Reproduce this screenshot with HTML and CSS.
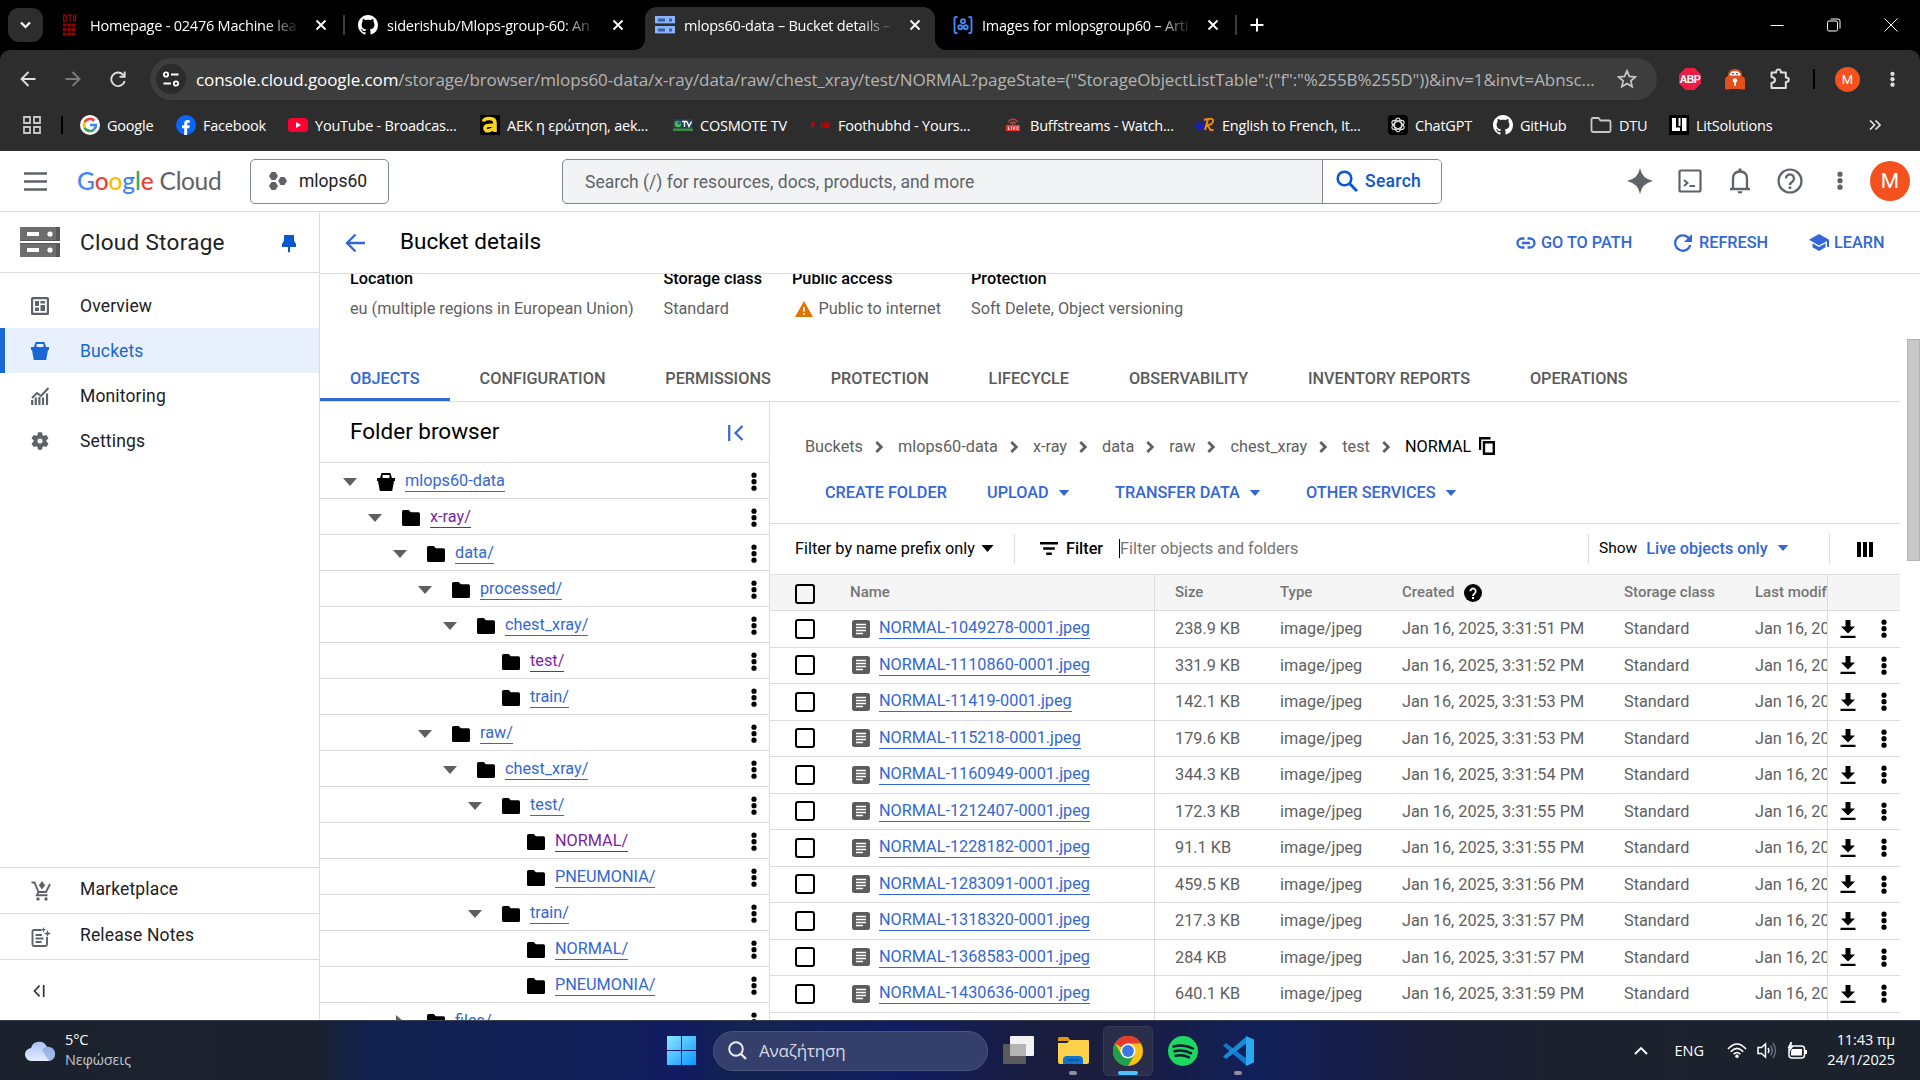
FILE: index.html
```html
<!DOCTYPE html>
<html lang="en">
<head>
<meta charset="utf-8">
<title>mlops60-data – Bucket details</title>
<link rel="stylesheet" href="styles.css">
</head>
<body>
<svg class="defs" aria-hidden="true">
  <symbol id="x" viewBox="0 0 12 12"><path d="M1.5 1.5l9 9m0-9l-9 9" fill="none" stroke="currentColor" stroke-width="1.8"/></symbol>
  <symbol id="github" viewBox="0 0 16 16"><path fill="currentColor" d="M8 0C3.58 0 0 3.58 0 8c0 3.54 2.29 6.53 5.47 7.59.4.07.55-.17.55-.38 0-.19-.01-.82-.01-1.49-2.01.37-2.53-.49-2.69-.94-.09-.23-.48-.94-.82-1.13-.28-.15-.68-.52-.01-.53.63-.01 1.08.58 1.23.82.72 1.21 1.87.87 2.33.66.07-.52.28-.87.51-1.07-1.78-.2-3.64-.89-3.64-3.95 0-.87.31-1.59.82-2.15-.08-.2-.36-1.02.08-2.12 0 0 .67-.21 2.2.82.64-.18 1.32-.27 2-.27s1.36.09 2 .27c1.53-1.04 2.2-.82 2.2-.82.44 1.1.16 1.92.08 2.12.51.56.82 1.27.82 2.15 0 3.07-1.87 3.75-3.65 3.95.29.25.54.73.54 1.48 0 1.07-.01 1.93-.01 2.2 0 .21.15.46.55.38A8.01 8.01 0 0 0 16 8c0-4.42-3.58-8-8-8z"/></symbol>
  <symbol id="dots" viewBox="0 0 6 20"><circle cx="3" cy="3.2" r="2.6"/><circle cx="3" cy="9.7" r="2.6"/><circle cx="3" cy="16.2" r="2.6"/></symbol>
  <symbol id="caret" viewBox="0 0 14 8"><path d="M0 0h14L7 8z"/></symbol>
  <symbol id="folder" viewBox="0 0 18 16"><path d="M1.6 0h5.2l2 2.2h7.600q1.600 0 1.600 1.600v10.600q0 1.600-1.600 1.600H1.600Q0 16 0 14.400V1.600Q0 0 1.600 0z"/></symbol>
  <symbol id="bucket" viewBox="0 0 18 18"><path fill-rule="evenodd" d="M4.600 0h8.800l1.600 5H18v3h-1L15.200 18H2.800L1 8H0V5h3zM5.600 2v3h6.800V2z"/></symbol>
  <symbol id="chev" viewBox="0 0 8 12"><path d="M1.300 1l5 5-5 5" fill="none" stroke="currentColor" stroke-width="2.700"/></symbol>
  <symbol id="doc" viewBox="0 0 18 18"><rect width="18" height="18" rx="2.500" fill="#5c5c5c"/><path d="M4 4.500h10M4 7.500h10M4 10.500h10M4 13.500h7" stroke="#fff" stroke-width="1.300"/></symbol>
  <symbol id="dl" viewBox="0 0 16 18"><path d="M5.500 0h5v6.500H15L8 13.500 1 6.500h4.500zM.5 15.700h15V18H.5z"/></symbol>
  <symbol id="server" viewBox="0 0 40 30"><path d="M0 0h40v14H0zM0 16h40v14H0z" fill="currentColor"/><path d="M36 0h4v14h-4zM36 16h4v14h-4zM0 13h40v1H0zM0 16h40v1H0z" fill="#000" opacity=".2"/><path d="M7 5h12v4H7zM7 21h12v4H7z" fill="#fff"/><circle cx="30" cy="7" r="2.600" fill="#fff"/><circle cx="30" cy="23" r="2.600" fill="#fff"/></symbol>
</svg>

<header class="browser">
  <div class="tabstrip">
    <button class="tabsearch"><svg width="11" height="8" viewBox="0 0 11 8"><path d="M1 1.500l4.500 4.500L10 1.500" fill="none" stroke="#fff" stroke-width="2.200"/></svg></button>
    <div class="tab first">
      <svg class="fav" viewBox="0 0 20 22" width="20" height="22"><g fill="none" stroke="#900" stroke-width="1.300"><path d="M4.700 .5v7.500M4.500 1q3.300 0 3.300 3.500T4.500 7.700M9 1h4M11 1v7M14.500 .5v5q0 2 1 2t1-2v-5"/><path d="M4 11h12M4 15.500h12M4 20h12" stroke-width="1.600"/></g><path fill="#900" d="M4 9.500h3v3H4zM8.500 9.500h3v3h-3zM13 9.500h3v3h-3zM4 14h3v3H4zM8.500 14h3v3h-3zM13 14h3v3h-3zM4 18.500h3v3H4zM8.500 18.500h3v3h-3zM13 18.500h3v3h-3z"/></svg>
      <span class="title">Homepage - 02476 Machine lea</span><svg class="close"><use href="#x"/></svg>
    </div>
    <i class="tabsep"></i>
    <div class="tab second">
      <svg class="fav gh"><use href="#github"/></svg>
      <span class="title">siderishub/Mlops-group-60: An</span><svg class="close"><use href="#x"/></svg>
    </div>
    <div class="tab active">
      <svg class="fav" viewBox="0 0 20 20" width="20" height="20"><path fill="#8ab4f8" d="M0 1h20v8H0zM0 11h20v8H0z"/><path fill="#3c5faa" d="M0 8h20v1H0zM0 18h20v1H0zM3 3.500h7v3H3zM14 3.500h3v3h-3zM3 13.500h7v3H3zM14 13.500h3v3h-3z"/></svg>
      <span class="title">mlops60-data – Bucket details –</span><svg class="close"><use href="#x"/></svg>
    </div>
    <div class="tab fourth">
      <svg class="fav" viewBox="0 0 20 20" width="20" height="20"><g fill="none" stroke="#4285f4" stroke-width="1.900"><path d="M4.500 2H3Q1.500 2 1.500 4v12q0 2 1.500 2h1.500M15.500 2H17q1.500 0 1.500 2v12q0 2-1.500 2h-1.500"/><circle cx="10" cy="6.300" r="2"/><circle cx="7.300" cy="12.300" r="2"/><circle cx="12.700" cy="12.300" r="2"/></g></svg>
      <span class="title">Images for mlopsgroup60 – Arti</span><svg class="close"><use href="#x"/></svg>
    </div>
    <i class="tabsep end"></i>
    <svg class="plus" width="14" height="14" viewBox="0 0 14 14"><path d="M7 .5v13M.5 7h13" stroke="#fff" stroke-width="2"/></svg>
    <div class="winctl">
      <svg width="14" height="14" viewBox="0 0 14 14"><path d="M.5 7.500h13" stroke="#fff"/></svg>
      <svg width="14" height="14" viewBox="0 0 14 14"><g fill="none" stroke="#fff"><rect x=".5" y="3" width="10" height="10" rx="1.500"/><path d="M3.500 1h7.500q2 0 2 2v7.500"/></g></svg>
      <svg width="14" height="14" viewBox="0 0 14 14"><path d="M.5 .5l13 13m0-13l-13 13" stroke="#fff"/></svg>
    </div>
  </div>

  <div class="toolbar">
    <div class="navbtns">
      <svg width="16" height="16" viewBox="0 0 16 16"><path d="M15.500 8H2M8.500 1L1.500 8l7 7" fill="none" stroke="#dedede" stroke-width="1.900"/></svg>
      <svg width="16" height="16" viewBox="0 0 16 16"><path d="M.5 8H14M7.500 1l7 7-7 7" fill="none" stroke="#7b7b7b" stroke-width="1.900"/></svg>
      <svg width="17" height="17" viewBox="0 0 17 17"><path d="M14.700 10A6.800 6.800 0 1 1 13 3.600L15 5.500M14.700 .5v5.300H9.500" fill="none" stroke="#dedede" stroke-width="1.900"/></svg>
    </div>
    <div class="omnibox">
      <span class="siteinfo"><svg width="16" height="16" viewBox="0 0 16 16"><g fill="none" stroke="#fff" stroke-width="1.800"><circle cx="3" cy="3.500" r="2.200"/><path d="M8 3.500h7.500M.5 12.500H8"/><circle cx="13" cy="12.500" r="2.200"/></g></svg></span>
      <span class="url"><b>console.cloud.google.com</b>/storage/browser/mlops60-data/x-ray/data/raw/chest_xray/test/NORMAL?pageState=("StorageObjectListTable":("f":"%255B%255D"))&amp;inv=1&amp;invt=Abnsc...</span>
      <svg class="star" width="20" height="20" viewBox="0 0 20 20"><path d="M10 1.800l2.400 5.600 6 .5-4.600 4 1.400 5.900L10 14.600l-5.200 3.200 1.400-5.900-4.600-4 6-.5z" fill="none" stroke="#c7c7c7" stroke-width="1.700"/></svg>
    </div>
    <div class="exts">
      <svg width="22" height="22" viewBox="0 0 22 22"><path d="M6.500 0h9L22 6.500v9L15.500 22h-9L0 15.500v-9z" fill="#ed1e45"/><text x="11" y="15" text-anchor="middle" class="abp">ABP</text></svg>
      <svg width="22" height="22" viewBox="0 0 22 22"><path d="M1 21V12q0-3 3-4Q4 1 11 1t7 7q3 1 3 4v9q-2 1-5 0H6q-3 1-5 0z" fill="#e2511a"/><path d="M5.500 7.500Q6 3 11 3t5.500 4.500z" fill="#fff"/><circle cx="9" cy="5.700" r=".8"/><circle cx="13" cy="5.700" r=".8"/><circle cx="11" cy="12.500" r="2.200" fill="#fff"/><path d="M10.300 13h1.600v5h-1.600z" fill="#fff"/></svg>
      <svg width="22" height="22" viewBox="0 0 22 22"><path d="M2.500 4.500h4.700q-.3-3 2.300-3t2.300 3h5v5q3 0 3 2.300t-3 2.300v6H2.500v-5q3.500-.5 3.500-3t-3.500-3z" fill="none" stroke="#dedede" stroke-width="2" stroke-linejoin="round"/></svg>
      <i></i>
      <span class="avatar sm">M</span>
      <svg class="menu" width="5" height="21"><use href="#dots"/></svg>
    </div>
  </div>

  <div class="bookmarks">
    <svg width="18" height="18" viewBox="0 0 18 18"><path d="M1 1h6v6H1zM11 1h6v6h-6zM1 11h6v6H1zM11 11h6v6h-6z" fill="none" stroke="#c7c7c7" stroke-width="1.800"/></svg>
    <i></i>
    <a><svg viewBox="0 0 20 20"><circle cx="10" cy="10" r="10" fill="#fff"/><g fill="none" stroke-width="2.700"><path d="M14.300 5.700A6 6 0 0 0 4.700 7.200" stroke="#ea4335"/><path d="M4.700 7.200a6 6 0 0 0 0 5.600" stroke="#fbbc05"/><path d="M4.700 12.800a6 6 0 0 0 9 1.900" stroke="#34a853"/><path d="M13.700 14.700A6 6 0 0 0 16 10h-6" stroke="#4285f4"/></g></svg>Google</a>
    <a><svg viewBox="0 0 20 20"><circle cx="10" cy="10" r="10" fill="#0866ff"/><path d="M8.200 20v-6.700H6v-3h2.200V8.600Q8.200 5 11.700 5l2 .2v2.600h-1.200q-1.400 0-1.400 1.400v1.100h2.600l-.5 3h-2.100V20z" fill="#fff"/></svg>Facebook</a>
    <a><svg viewBox="0 0 20 20"><rect y="3" width="20" height="14" rx="3.500" fill="#f03"/><path d="M8 7l5 3-5 3z" fill="#fff"/></svg>YouTube - Broadcas...</a>
    <a><svg viewBox="0 0 20 20"><path d="M0 0h20v20H0z"/><path d="M3.500 6.500Q4 3.500 9.500 3.500T15 8v9M14.500 10.500Q5 9.500 5 13t4 2.500 5-3" fill="none" stroke="#ffd41f" stroke-width="3.600"/></svg>AEK η ερώτηση, aek...</a>
    <a><svg viewBox="0 0 20 20"><path d="M0 4h20v12H0z" fill="#24404f"/><path d="M0 13.500h20V16H0z" fill="#3c8a45"/><circle cx="5" cy="9" r="3.300" fill="#56b947"/><circle cx="6" cy="8" r="1.800" fill="#1266a8"/><path d="M9 6.500h5M11.500 6.500V12M14 6.500l2 5 2.500-5" fill="none" stroke="#fff" stroke-width="1.400"/></svg>COSMOTE TV</a>
    <a><svg viewBox="0 0 20 20"><path d="M1 13V8h3M1 10.500h2.500M10.500 7.500V13m3-5.500V13m-3-2.500h3M15.500 8v4.500h1q2 0 2-2.200T16.500 8z" fill="none" stroke="#c00" stroke-width="1.400"/></svg>Foothubhd - Yours...</a>
    <a class="buff"><svg viewBox="0 0 20 20"><path d="M3 10h14v6H3z" fill="#e5383b"/><path d="M5 7q5-6 10 0M7 9q3-4 6 0M10 7v3" fill="none" stroke="#b3403a" stroke-width="1.400"/><path d="M5.500 11.500v3h1.500m1.500-3v3m1.500-3l1 3 1-3m3.500.3h-1.500v2.700h1.500" fill="none" stroke="#fff" stroke-width=".7"/></svg>Buffstreams - Watch...</a>
    <a><svg viewBox="0 0 20 20"><path d="M1 7l2 7 2-5 2 5 2.500-7" fill="none" stroke="#1b1bd6" stroke-width="2"/><path d="M10 15l3-11q6-1 5 2.500T12.500 10l3 5h3M9 5q2-1 4-1" fill="none" stroke="#e88a1a" stroke-width="2"/></svg>English to French, It...</a>
    <a><svg viewBox="0 0 20 20"><rect width="20" height="20" rx="4" fill="#000"/><g fill="none" stroke="#ddd" stroke-width="1.200"><ellipse cx="10" cy="10" rx="3.500" ry="6.800"/><ellipse cx="10" cy="10" rx="3.500" ry="6.800" transform="rotate(60 10 10)"/><ellipse cx="10" cy="10" rx="3.500" ry="6.800" transform="rotate(120 10 10)"/></g></svg>ChatGPT</a>
    <a><svg><use href="#github"/></svg>GitHub</a>
    <a class="dtu"><svg viewBox="0 0 22 20"><path d="M1.500 15V4.500q0-1.500 1.500-1.500h5.500l2 2.500H19q1.500 0 1.500 1.500v8.500q0 1.500-1.500 1.500H3Q1.500 17 1.500 15z" fill="none" stroke="#c7c7c7" stroke-width="1.800"/></svg>DTU</a>
    <a><svg viewBox="0 0 20 20"><path d="M0 0h20v20H0z"/><path d="M3 3h4v9.500h4V16H3zM13 3h4.500v13H13zM9.500 3h2v8h-2z" fill="#fff"/></svg>LitSolutions</a>
    <svg class="more" width="12" height="10" viewBox="0 0 12 10"><path d="M1 .5L5.500 5 1 9.500M6.500 .5L11 5 6.500 9.500" fill="none" stroke="#dedede" stroke-width="1.700"/></svg>
  </div>
</header>

<div class="gcbar">
  <svg class="burger" width="23" height="19" viewBox="0 0 23 19"><path d="M0 1.500h23M0 9.500h23M0 17.500h23" stroke="#5f6368" stroke-width="2.400"/></svg>
  <div class="logo"><b><i class="gb">G</i><i class="gr">o</i><i class="gy">o</i><i class="gb">g</i><i class="gg">l</i><i class="gr">e</i></b><span>Cloud</span></div>
  <button class="project"><svg width="18" height="18" viewBox="0 0 18 18"><path fill="#5f6368" d="M2.500 0h4L9 4 6.500 8h-4L0 4zM2.500 10h4L9 14l-2.500 4h-4L0 14zM11.500 5h4L18 9l-2.500 4h-4L9.200 9z"/></svg>mlops60</button>
  <div class="search"><span>Search (/) for resources, docs, products, and more</span>
    <button><svg width="22" height="22" viewBox="0 0 22 22"><circle cx="8.500" cy="8.500" r="6.800" fill="none" stroke="#0b57d0" stroke-width="2.600"/><path d="M13.500 13.500l7.500 7.500" stroke="#0b57d0" stroke-width="3"/></svg>Search</button></div>
  <div class="gcicons">
    <svg width="28" height="28" viewBox="0 0 28 28"><path fill="#5f6368" d="M14 1q1.800 10.500 13 13-11.200 2.500-13 13Q12.200 16.500 1 14 12.200 11.500 14 1z"/></svg>
    <svg width="24" height="24" viewBox="0 0 24 24"><rect x="1.500" y="1.500" width="21" height="21" rx="1.500" fill="none" stroke="#5f6368" stroke-width="2.200"/><path d="M6 11l3.500 3L6 17M11.500 17H17" fill="none" stroke="#5f6368" stroke-width="2"/></svg>
    <svg width="22" height="26" viewBox="0 0 22 26"><path d="M1 21h20M4 21V11q0-7.500 7-7.500t7 7.500v10" fill="none" stroke="#5f6368" stroke-width="2.300"/><path d="M11 .5v3" stroke="#5f6368" stroke-width="3"/><path d="M8.500 23.200h5a2.500 2.300 0 0 1-5 0z" fill="#5f6368"/></svg>
    <svg width="26" height="26" viewBox="0 0 26 26"><circle cx="13" cy="13" r="11.500" fill="none" stroke="#5f6368" stroke-width="2.200"/><path d="M9 10.500a4 4 0 1 1 6.500 3Q13 15 13 17" fill="none" stroke="#5f6368" stroke-width="2.300"/><path d="M11.700 18.500h2.600V21h-2.600z" fill="#5f6368"/></svg>
    <svg class="gdots" width="6" height="20"><use href="#dots"/></svg>
    <span class="avatar lg">M</span>
  </div>
</div>

<div class="workspace">
  <aside class="side">
    <div class="sidehead"><svg class="srv"><use href="#server"/></svg><span>Cloud Storage</span><svg class="pin" width="14" height="18" viewBox="0 0 14 18"><path d="M2 0h10v5.500l2 3.500v3H8v4.500L7 18l-1-1.500V12H0V9l2-3.500z" fill="#0b57d0"/></svg></div>
    <nav>
      <a><svg viewBox="0 0 18 18"><path fill-rule="evenodd" fill="#5f6368" d="M1.500 0h15Q18 0 18 1.500v15q0 1.500-1.500 1.500h-15Q0 18 0 16.500v-15Q0 0 1.500 0zM2.200 2.200v13.600h13.600V2.200z"/><path fill="#5f6368" d="M4 4h4v5H4zM9.500 4H14v2.500H9.500zM4 10.500h4V14H4zM9.500 8H14v6H9.500z"/></svg>Overview</a>
      <a class="on"><svg><use href="#bucket"/></svg>Buckets</a>
      <a><svg viewBox="0 0 18 18"><path d="M1 11l5-5 4 3 7.500-8" fill="none" stroke="#5f6368" stroke-width="2"/><path d="M1.200 13v5M4.800 10.500V18M8.400 10v8M12 10.500V18M16 6.500V18" stroke="#5f6368" stroke-width="2.200"/></svg>Monitoring</a>
      <a><svg viewBox="2 2 20 20"><path fill="#5f6368" d="M19.140 12.940c.04-.3.060-.61.060-.94 0-.32-.02-.64-.07-.94l2.030-1.580a.49.490 0 0 0 .12-.61l-1.920-3.320a.488.488 0 0 0-.59-.22l-2.390.96c-.5-.38-1.030-.7-1.620-.94l-.36-2.540a.484.484 0 0 0-.48-.41h-3.840c-.24 0-.43.170-.47.410l-.36 2.540c-.59.240-1.130.570-1.620.940l-2.390-.96c-.22-.08-.47 0-.59.220L2.740 8.870c-.12.210-.08.470.12.610l2.030 1.580c-.05.300-.09.630-.09.940s.02.640.070.940l-2.030 1.580a.49.490 0 0 0-.12.610l1.920 3.320c.12.220.37.290.59.220l2.390-.96c.5.380 1.030.700 1.620.940l.36 2.540c.05.240.24.410.48.410h3.840c.24 0 .44-.17.47-.41l.36-2.540c.59-.24 1.130-.56 1.620-.94l2.390.96c.22.080.47 0 .59-.22l1.920-3.320c.12-.22.070-.47-.12-.61l-2.010-1.580zM12 14.800a2.800 2.800 0 1 1 0-5.600 2.800 2.800 0 0 1 0 5.600z"/></svg>Settings</a>
    </nav>
    <div class="sidefoot">
      <a><svg viewBox="0 0 20 20"><path d="M.5 1.500h3l4 9.500h7.500l4-8M7.500 11l-1.700 3.200H16.500" fill="none" stroke="#5f6368" stroke-width="1.900"/><path d="M11 0l3.200 4.200L11 8.500 7.800 4.200z" fill="#5f6368"/><circle cx="7" cy="18" r="1.700" fill="#5f6368"/><circle cx="15" cy="18" r="1.700" fill="#5f6368"/></svg>Marketplace</a>
      <a><svg viewBox="0 0 20 20"><path d="M10.500 3H3Q1.500 3 1.500 4.500v13Q1.500 19 3 19h11.500q1.500 0 1.500-1.500V10M4.500 8H11M4.500 11.500h8M4.500 15h6" fill="none" stroke="#5f6368" stroke-width="1.900"/><path d="M12.500 0l.8 2 2 .8-2 .8-.8 2-.8-2-2-.8 2-.8zM16.500 3l1 2.500L20 6.500l-2.500 1-1 2.500-1-2.500-2.500-1 2.500-1z" fill="#5f6368"/></svg>Release Notes</a>
      <div class="collapse"><svg width="12" height="12" viewBox="0 0 12 12"><path d="M6.500 .7L1.500 6l5 5.300M10.700 0v12" fill="none" stroke="#333" stroke-width="1.700"/></svg></div>
    </div>
  </aside>

  <main class="main">
    <div class="pagehead">
      <svg width="20" height="20" viewBox="0 0 20 20"><path d="M20 10H2.500M10.500 1.500L2 10l8.500 8.500" fill="none" stroke="#3367d6" stroke-width="2.300"/></svg>
      <h1>Bucket details</h1>
      <div class="headacts">
        <a><svg width="20" height="12" viewBox="0 0 20 12"><path d="M8.500 1.500H6a4.500 4.500 0 0 0 0 9h2.500M11.500 1.500H14a4.500 4.500 0 0 1 0 9h-2.500M6 6h8" fill="none" stroke="#3367d6" stroke-width="2.300"/></svg>GO TO PATH</a>
        <a class="rf"><svg width="18" height="18" viewBox="0 0 18 18"><path d="M16.300 11A7.700 7.700 0 1 1 14 3.300L16.500 5.500" fill="none" stroke="#3367d6" stroke-width="2.300"/><path d="M18 0v8h-8z" fill="#3367d6"/></svg>REFRESH</a>
        <a class="ln"><svg width="20" height="17" viewBox="0 0 20 17"><path d="M10 0l10 5.700V13h-2V7l-8 4.500L0 5.700zM3.500 9.300L10 13l6.500-3.700v4L10 17l-6.500-3.700z" fill="#3367d6"/></svg>LEARN</a>
      </div>
    </div>
    <div class="scroll">
      <section class="content">
        <dl class="info">
          <div><dt>Location</dt><dd>eu (multiple regions in European Union)</dd></div>
          <div><dt>Storage class</dt><dd>Standard</dd></div>
          <div><dt>Public access</dt><dd class="warn"><svg width="18" height="16" viewBox="0 0 18 16"><path d="M9 0l9 16H0z" fill="#e37400"/><path d="M9 6v4.500M9 12v2" stroke="#fff" stroke-width="1.700"/></svg>Public to internet</dd></div>
          <div><dt>Protection</dt><dd>Soft Delete, Object versioning</dd></div>
        </dl>
        <div class="tabs"><a class="on">OBJECTS</a><a>CONFIGURATION</a><a>PERMISSIONS</a><a>PROTECTION</a><a>LIFECYCLE</a><a>OBSERVABILITY</a><a>INVENTORY REPORTS</a><a>OPERATIONS</a></div>
        <div class="split">
          <div class="tree">
            <div class="treehead"><h2>Folder browser</h2><svg width="16" height="16" viewBox="0 0 16 16"><path d="M1.200 0v16M14.500 1L7.500 8l7 7" fill="none" stroke="#3367d6" stroke-width="2.200"/></svg></div>
            <div class="tr l0"><svg class="ca"><use href="#caret"/></svg><svg class="bk"><use href="#bucket"/></svg><a>mlops60-data</a><svg class="dt"><use href="#dots"/></svg></div>
            <div class="tr l1"><svg class="ca"><use href="#caret"/></svg><svg class="fo"><use href="#folder"/></svg><a class="v">x-ray/</a><svg class="dt"><use href="#dots"/></svg></div>
            <div class="tr l2"><svg class="ca"><use href="#caret"/></svg><svg class="fo"><use href="#folder"/></svg><a>data/</a><svg class="dt"><use href="#dots"/></svg></div>
            <div class="tr l3"><svg class="ca"><use href="#caret"/></svg><svg class="fo"><use href="#folder"/></svg><a>processed/</a><svg class="dt"><use href="#dots"/></svg></div>
            <div class="tr l4"><svg class="ca"><use href="#caret"/></svg><svg class="fo"><use href="#folder"/></svg><a>chest_xray/</a><svg class="dt"><use href="#dots"/></svg></div>
            <div class="tr l5"><svg class="ca"></svg><svg class="fo"><use href="#folder"/></svg><a class="v">test/</a><svg class="dt"><use href="#dots"/></svg></div>
            <div class="tr l5"><svg class="ca"></svg><svg class="fo"><use href="#folder"/></svg><a>train/</a><svg class="dt"><use href="#dots"/></svg></div>
            <div class="tr l3"><svg class="ca"><use href="#caret"/></svg><svg class="fo"><use href="#folder"/></svg><a>raw/</a><svg class="dt"><use href="#dots"/></svg></div>
            <div class="tr l4"><svg class="ca"><use href="#caret"/></svg><svg class="fo"><use href="#folder"/></svg><a>chest_xray/</a><svg class="dt"><use href="#dots"/></svg></div>
            <div class="tr l5"><svg class="ca"><use href="#caret"/></svg><svg class="fo"><use href="#folder"/></svg><a>test/</a><svg class="dt"><use href="#dots"/></svg></div>
            <div class="tr l6"><svg class="ca"></svg><svg class="fo"><use href="#folder"/></svg><a class="v">NORMAL/</a><svg class="dt"><use href="#dots"/></svg></div>
            <div class="tr l6"><svg class="ca"></svg><svg class="fo"><use href="#folder"/></svg><a>PNEUMONIA/</a><svg class="dt"><use href="#dots"/></svg></div>
            <div class="tr l5"><svg class="ca"><use href="#caret"/></svg><svg class="fo"><use href="#folder"/></svg><a>train/</a><svg class="dt"><use href="#dots"/></svg></div>
            <div class="tr l6"><svg class="ca"></svg><svg class="fo"><use href="#folder"/></svg><a>NORMAL/</a><svg class="dt"><use href="#dots"/></svg></div>
            <div class="tr l6"><svg class="ca"></svg><svg class="fo"><use href="#folder"/></svg><a>PNEUMONIA/</a><svg class="dt"><use href="#dots"/></svg></div>
            <div class="tr l2"><svg class="ca shut"><use href="#caret"/></svg><svg class="fo"><use href="#folder"/></svg><a>files/</a><svg class="dt"><use href="#dots"/></svg></div>
          </div>
          <div class="objects">
            <div class="crumbs"><span>Buckets</span><svg><use href="#chev"/></svg><span>mlops60-data</span><svg><use href="#chev"/></svg><span>x-ray</span><svg><use href="#chev"/></svg><span>data</span><svg><use href="#chev"/></svg><span>raw</span><svg><use href="#chev"/></svg><span>chest_xray</span><svg><use href="#chev"/></svg><span>test</span><svg><use href="#chev"/></svg><span class="cur">NORMAL</span><svg class="copy" viewBox="0 0 16 18"><path d="M1 13V1.200h10.500M5 5.200h9.800v11.600H5z" fill="none" stroke="#000" stroke-width="2.400"/></svg></div>
            <div class="acts"><a>CREATE FOLDER</a><a>UPLOAD<svg><use href="#caret"/></svg></a><a>TRANSFER DATA<svg><use href="#caret"/></svg></a><a>OTHER SERVICES<svg><use href="#caret"/></svg></a></div>
            <div class="filter">
              <span class="prefix">Filter by name prefix only<svg width="13" height="7"><use href="#caret"/></svg></span>
              <span class="fbox"><svg width="18" height="13" viewBox="0 0 18 13"><path d="M0 1.200h18M3.200 6.500h11.600M6.200 11.800h5.600" stroke="#000" stroke-width="2.400"/></svg><b>Filter</b><span class="ph">Filter objects and folders</span></span>
              <span class="show">Show<a>Live objects only<svg><use href="#caret"/></svg></a></span>
              <span class="cols"><svg width="16" height="15" viewBox="0 0 16 15"><path d="M0 0h4v15H0zM6 0h4v15H6zM12 0h4v15h-4z"/></svg></span>
            </div>
            <div class="row head"><i></i><span>Name</span><span class="c1">Size</span><span>Type</span><span>Created<svg class="q" viewBox="0 0 18 18"><circle cx="9" cy="9" r="9"/><path d="M6.300 7.200a2.700 2.700 0 1 1 4.300 2.200Q9 10.500 9 12" fill="none" stroke="#fff" stroke-width="1.800"/><path d="M8 13h2v2H8z" fill="#fff"/></svg></span><span>Storage class</span><span class="lm">Last modified</span><span class="ra"></span></div>
            <div class="row"><i></i><span><svg class="doc"><use href="#doc"/></svg><a>NORMAL-1049278-0001.jpeg</a></span><span class="c1">238.9 KB</span><span>image/jpeg</span><span>Jan 16, 2025, 3:31:51 PM</span><span>Standard</span><span class="lm">Jan 16, 2025</span><span class="ra"><svg class="dl"><use href="#dl"/></svg><svg class="dt"><use href="#dots"/></svg></span></div>
            <div class="row"><i></i><span><svg class="doc"><use href="#doc"/></svg><a>NORMAL-1110860-0001.jpeg</a></span><span class="c1">331.9 KB</span><span>image/jpeg</span><span>Jan 16, 2025, 3:31:52 PM</span><span>Standard</span><span class="lm">Jan 16, 2025</span><span class="ra"><svg class="dl"><use href="#dl"/></svg><svg class="dt"><use href="#dots"/></svg></span></div>
            <div class="row"><i></i><span><svg class="doc"><use href="#doc"/></svg><a>NORMAL-11419-0001.jpeg</a></span><span class="c1">142.1 KB</span><span>image/jpeg</span><span>Jan 16, 2025, 3:31:53 PM</span><span>Standard</span><span class="lm">Jan 16, 2025</span><span class="ra"><svg class="dl"><use href="#dl"/></svg><svg class="dt"><use href="#dots"/></svg></span></div>
            <div class="row"><i></i><span><svg class="doc"><use href="#doc"/></svg><a>NORMAL-115218-0001.jpeg</a></span><span class="c1">179.6 KB</span><span>image/jpeg</span><span>Jan 16, 2025, 3:31:53 PM</span><span>Standard</span><span class="lm">Jan 16, 2025</span><span class="ra"><svg class="dl"><use href="#dl"/></svg><svg class="dt"><use href="#dots"/></svg></span></div>
            <div class="row"><i></i><span><svg class="doc"><use href="#doc"/></svg><a>NORMAL-1160949-0001.jpeg</a></span><span class="c1">344.3 KB</span><span>image/jpeg</span><span>Jan 16, 2025, 3:31:54 PM</span><span>Standard</span><span class="lm">Jan 16, 2025</span><span class="ra"><svg class="dl"><use href="#dl"/></svg><svg class="dt"><use href="#dots"/></svg></span></div>
            <div class="row"><i></i><span><svg class="doc"><use href="#doc"/></svg><a>NORMAL-1212407-0001.jpeg</a></span><span class="c1">172.3 KB</span><span>image/jpeg</span><span>Jan 16, 2025, 3:31:55 PM</span><span>Standard</span><span class="lm">Jan 16, 2025</span><span class="ra"><svg class="dl"><use href="#dl"/></svg><svg class="dt"><use href="#dots"/></svg></span></div>
            <div class="row"><i></i><span><svg class="doc"><use href="#doc"/></svg><a>NORMAL-1228182-0001.jpeg</a></span><span class="c1">91.1 KB</span><span>image/jpeg</span><span>Jan 16, 2025, 3:31:55 PM</span><span>Standard</span><span class="lm">Jan 16, 2025</span><span class="ra"><svg class="dl"><use href="#dl"/></svg><svg class="dt"><use href="#dots"/></svg></span></div>
            <div class="row"><i></i><span><svg class="doc"><use href="#doc"/></svg><a>NORMAL-1283091-0001.jpeg</a></span><span class="c1">459.5 KB</span><span>image/jpeg</span><span>Jan 16, 2025, 3:31:56 PM</span><span>Standard</span><span class="lm">Jan 16, 2025</span><span class="ra"><svg class="dl"><use href="#dl"/></svg><svg class="dt"><use href="#dots"/></svg></span></div>
            <div class="row"><i></i><span><svg class="doc"><use href="#doc"/></svg><a>NORMAL-1318320-0001.jpeg</a></span><span class="c1">217.3 KB</span><span>image/jpeg</span><span>Jan 16, 2025, 3:31:57 PM</span><span>Standard</span><span class="lm">Jan 16, 2025</span><span class="ra"><svg class="dl"><use href="#dl"/></svg><svg class="dt"><use href="#dots"/></svg></span></div>
            <div class="row"><i></i><span><svg class="doc"><use href="#doc"/></svg><a>NORMAL-1368583-0001.jpeg</a></span><span class="c1">284 KB</span><span>image/jpeg</span><span>Jan 16, 2025, 3:31:57 PM</span><span>Standard</span><span class="lm">Jan 16, 2025</span><span class="ra"><svg class="dl"><use href="#dl"/></svg><svg class="dt"><use href="#dots"/></svg></span></div>
            <div class="row"><i></i><span><svg class="doc"><use href="#doc"/></svg><a>NORMAL-1430636-0001.jpeg</a></span><span class="c1">640.1 KB</span><span>image/jpeg</span><span>Jan 16, 2025, 3:31:59 PM</span><span>Standard</span><span class="lm">Jan 16, 2025</span><span class="ra"><svg class="dl"><use href="#dl"/></svg><svg class="dt"><use href="#dots"/></svg></span></div>
            <div class="row stub"><b></b><span></span><span class="c1"></span><span></span><span></span><span></span><span class="lm"></span><span class="ra"></span></div>
          </div>
        </div>
      </section>
      <div class="bar"><i></i></div>
    </div>
  </main>
</div>

<footer class="taskbar">
  <div class="weather">
    <svg width="31" height="20" viewBox="0 0 31 20"><defs><linearGradient id="cl" x1="0" y1="0" x2="0" y2="1"><stop offset="0" stop-color="#a9c3f3"/><stop offset="1" stop-color="#e3edfd"/></linearGradient></defs><path d="M7 20a6.500 6.500 0 0 1-1-13A8.500 8.500 0 0 1 22 6a7 7 0 0 1 2 14z" fill="url(#cl)"/><path d="M17 9a7 7 0 0 1 13 4q0 6-6 7" fill="#7f9fe0" opacity=".6"/></svg>
    <div>5°C<br><span>Νεφώσεις</span></div>
  </div>
  <div class="dock">
    <svg class="win" width="29" height="29" viewBox="0 0 29 29"><defs><linearGradient id="wg" x1="0" y1="0" x2="1" y2="1"><stop offset="0" stop-color="#8be6ff"/><stop offset="1" stop-color="#0a96ff"/></linearGradient></defs><path fill="url(#wg)" d="M0 0h14v14H0zM15 0h14v14H15zM0 15h14v14H0zM15 15h14v14H15z"/></svg>
    <div class="find"><svg width="19" height="19" viewBox="0 0 19 19"><circle cx="8" cy="8" r="6.800" fill="none" stroke="#e8eaf0" stroke-width="2"/><path d="M13 13l5 5" stroke="#e8eaf0" stroke-width="2.400"/></svg>Αναζήτηση</div>
    <div class="app"><svg width="31" height="29" viewBox="0 0 31 29"><rect y="8" width="23" height="20" rx="1" fill="#5a5a5a"/><rect x="7" width="24" height="20" rx="1" fill="#f2f2f2"/><path d="M7 8h16v12H7z" fill="#b4b4b4"/></svg></div>
    <div class="app run"><svg width="31" height="27" viewBox="0 0 31 27"><path d="M0 1.500Q0 0 1.500 0H10l3 4H0z" fill="#dc9b0a"/><path d="M0 6h9l3-3h18q1 0 1 1v21q0 2-2 2H2q-2 0-2-2z" fill="#ffd04a"/><path d="M5 27v-4q0-4 4-4h12q4 0 4 4v4z" fill="#0f74cf"/><path d="M9 23h12" stroke="#0a4f98" stroke-width="1.500"/></svg></div>
    <div class="app run on"><svg width="30" height="30" viewBox="0 0 30 30"><circle cx="15" cy="15" r="15" fill="#fbc116"/><path d="M2 7.500A15 15 0 0 1 28 7.500H15L8.500 11.200z" fill="#e33b2e"/><path d="M2 7.500A15 15 0 0 0 15 30l6.500-11.200L8.500 18.700z" fill="#1fa04b"/><circle cx="15" cy="15" r="7.500" fill="#fff"/><circle cx="15" cy="15" r="5.900" fill="#3b78e7"/></svg></div>
    <div class="app"><svg width="30" height="30" viewBox="0 0 30 30"><circle cx="15" cy="15" r="15" fill="#1ed760"/><path d="M5.500 10.500q10-2.800 19.500 2M6.500 15.300q8.500-2.300 16.500 1.900M7.500 19.800q7-1.800 13.500 1.600" fill="none" stroke="#101a30" stroke-width="2.500" stroke-linecap="round"/></svg></div>
    <div class="app run"><svg width="31" height="30" viewBox="0 0 31 30"><path d="M0 9.500l3-2.500L24 23v7z" fill="#1478c8"/><path d="M0 20.500l3 2.500L24 7V0z" fill="#1a8ad8"/><path d="M23 0l8 3.500v23L23 30z" fill="#2ba8f0"/></svg></div>
  </div>
  <div class="tray">
    <svg class="up" width="14" height="9" viewBox="0 0 14 9"><path d="M1 8l6-6 6 6" fill="none" stroke="#fff" stroke-width="1.900"/></svg>
    <span class="lang">ENG</span>
    <svg width="20" height="15" viewBox="0 0 20 15"><g fill="none" stroke="#fff" stroke-width="1.600"><path d="M1 6q9-10 18 0M3.800 8.700q6.200-6.600 12.400 0M6.600 11.300q3.400-3.500 6.800 0"/></g><circle cx="10" cy="13.200" r="1.700" fill="#fff"/></svg>
    <svg width="20" height="17" viewBox="0 0 20 17"><path d="M1 5.500h3.500L8.500 2v13l-4-3.500H1zM11 6q1.800 2.500 0 5" fill="none" stroke="#fff" stroke-width="1.500"/><path d="M13.500 3.500q3.500 5 0 10M16 1q5 7.500 0 15" fill="none" stroke="#666c78" stroke-width="1.500"/></svg>
    <svg width="20" height="17" viewBox="0 0 20 17"><rect x="2" y="4" width="15.500" height="12" rx="3" fill="none" stroke="#fff" stroke-width="1.500"/><path d="M5.500 7h9.500v6.500h-11V9zM18 8h2v4h-2zM3.500 0l-3 6h2.300l-1 5 4.700-7H4.200l1-4z" fill="#fff"/></svg>
    <div class="clock">11:43 πμ<br>24/1/2025</div>
  </div>
</footer>
</body>
</html>
```
FILE: styles.css
```css
* { box-sizing: border-box; }
body {
  margin: 0;
  width: 1920px;
  height: 1080px;
  overflow: hidden;
  display: flex;
  flex-direction: column;
  background: #fff;
  font-family: Roboto, sans-serif;
  font-size: 16.25px;
  color: #000;
}
svg { flex: none; display: block; }
a { color: inherit; text-decoration: none; }
button { font: inherit; margin: 0; padding: 0; border: 0; background: none; display: flex; align-items: center; }
.defs { display: none; }

/* browser chrome */
.browser {
  height: 151px;
  flex: none;
  background: linear-gradient(#000 70px, #2d2d2d 70px);
  color: #fff;
  font-family: "Open Sans", "Noto Sans", sans-serif;
  font-size: 14.5px;
}
.tabstrip { height: 50px; background: #000; display: flex; align-items: center; padding-left: 8px; }
.tabsearch { width: 35px; height: 34px; border-radius: 11px; background: #2d2d2d; justify-content: center; }
.tab { display: flex; align-items: center; height: 43px; margin-top: 7px; padding-bottom: 7px; width: 290px; }
.tab.first { padding-left: 16px; }
.tab.first .title { margin-left: 11px; }
.fav { width: 20px; }
.fav.gh { height: 20px; }
.title {
  width: 211px;
  margin-left: 9px;
  overflow: hidden;
  white-space: nowrap;
  letter-spacing: -0.22px;
  -webkit-mask-image: linear-gradient(90deg, #000 175px, transparent 211px);
  mask-image: linear-gradient(90deg, #000 175px, transparent 211px);
}
.close { width: 12px; height: 12px; margin-left: 14px; }
.tabsep { width: 2px; height: 20px; background: #3c3c3c; margin-left: 10px; }
.tab.second { padding-left: 13px; width: 300px; }
.tab.active { background: #2d2d2d; border-radius: 12px 12px 0 0; padding-left: 10px; position: relative; }
.tab.active::before, .tab.active::after {
  content: "";
  position: absolute;
  bottom: 0;
  width: 12px;
  height: 12px;
}
.tab.active::before { left: -12px; background: radial-gradient(circle at 0 0, #000 12px, #2d2d2d 12.500px); }
.tab.active::after { right: -12px; background: radial-gradient(circle at 100% 0, #000 12px, #2d2d2d 12.500px); }
.tab.fourth { padding-left: 18px; }
.tabsep.end { margin-left: 10px; }
.plus { margin-left: 13px; }
.winctl { margin-left: auto; display: flex; gap: 43px; padding-right: 22px; }

.toolbar { height: 58px; display: flex; align-items: center; padding-left: 20px; background: #2d2d2d; border-radius: 10px 10px 0 0; }
.navbtns { display: flex; align-items: center; gap: 29px; width: 130px; }
.omnibox { width: 1507px; height: 42px; border-radius: 21px; background: #3d3d3d; display: flex; align-items: center; padding-left: 6px; }
.siteinfo { width: 30px; height: 30px; border-radius: 50%; background: #2b2b2b; display: flex; align-items: center; justify-content: center; }
.url { margin-left: 10px; width: 1421px; font-size: 17px; letter-spacing: -0.1px; color: #b5b5b5; white-space: nowrap; }
.url b { font-weight: 400; color: #fff; }
.exts { display: flex; align-items: center; padding-left: 22px; }
.exts svg + svg { margin-left: 23px; }
.exts i { width: 2px; height: 20px; background: #000; margin: 0 20px 0 22px; }
.exts .menu { margin-left: 30px; fill: #dedede; }
.abp { font: bold 10.500px "Liberation Sans", sans-serif; letter-spacing: -0.6px; fill: #fff; }
.avatar { display: flex; align-items: center; justify-content: center; border-radius: 50%; background: #f4511e; color: #fff; font-family: Roboto, sans-serif; }
.avatar.sm { width: 25px; height: 25px; font-size: 13px; }
.avatar.lg { width: 40px; height: 40px; font-size: 21px; }

.bookmarks {
  height: 34px;
  display: grid;
  grid-template-columns: 38px 19px 96px 112px 192px 193px 138px 192px 192px 193px 105px 97px 79px 200px 12px;
  align-items: center;
  padding-left: 23px;
  letter-spacing: -0.22px;
  white-space: nowrap;
}
.bookmarks i { width: 2px; height: 18px; background: #000; }
.bookmarks a { display: flex; align-items: center; gap: 7px; }
.bookmarks a svg { width: 20px; height: 20px; }
.bookmarks .dtu svg { width: 22px; }

/* console header */
.gcbar { height: 61px; flex: none; border-bottom: 1px solid #dadce0; display: flex; align-items: center; padding: 0 10px 0 24px; }
.logo { display: flex; margin-left: 30px; width: 173px; padding-bottom: 2px; font-family: Lato, sans-serif; font-size: 24.500px; letter-spacing: -0.1px; color: #5f6368; gap: 6px; white-space: nowrap; }
.logo b { font-weight: 500; }
.logo span { letter-spacing: -0.35px; }
.logo i { font-style: normal; }
.gb { color: #4285f4; } .gr { color: #ea4335; } .gy { color: #fbbc04; } .gg { color: #34a853; }
.project { width: 139px; height: 45px; border: 1px solid #80868b; border-radius: 5px; padding-left: 18px; gap: 12px; font-size: 17.500px; color: #202124; }
.search { margin-left: 173px; width: 880px; height: 45px; border: 1px solid #80868b; border-radius: 5px; background: #f1f3f4; display: flex; align-items: center; overflow: hidden; font-size: 17.500px; color: #5f6368; }
.search span { width: 759px; padding: 2px 0 0 22px; }
.search button { flex: 1; height: 43px; background: #fff; border-left: 1px solid #80868b; padding-left: 13px; gap: 7px; color: #0b57d0; font-weight: 500; font-size: 17.500px; letter-spacing: 0.3px; }
.gcicons { margin-left: auto; display: grid; grid-template-columns: repeat(6, 50px); width: 275px; justify-content: end; justify-items: center; align-items: center; margin-right: -5px; }
.gdots { fill: #5f6368; }

.workspace { display: flex; height: 808px; flex: none; }
.side { width: 320px; flex: none; border-right: 1px solid #dadce0; display: flex; flex-direction: column; font-size: 17.500px; letter-spacing: 0.15px; color: #202124; }
.sidehead { height: 61px; border-bottom: 1px solid #dadce0; display: flex; align-items: center; padding-left: 20px; font-size: 22.500px; letter-spacing: 0.3px; }
.sidehead .srv { width: 40px; height: 30px; color: #6e6e6e; }
.sidehead span { margin-left: 20px; width: 202px; }
.sidehead .pin { margin-top: 3px; }
.side nav { padding-top: 10px; }
.side a { height: 45px; display: flex; align-items: center; gap: 31px; padding-left: 31px; }
.side a svg { width: 18px; height: 18px; }
.side a.on { background: #e8f0fe; color: #1967d2; fill: #1967d2; border-left: 5px solid #1967d2; padding-left: 26px; }
.sidefoot { margin-top: auto; }
.sidefoot a { height: 46px; border-top: 1px solid #dadce0; padding-bottom: 4px; gap: 29px; }
.sidefoot a svg { width: 20px; height: 20px; margin-top: 4px; }
.collapse { height: 61px; border-top: 1px solid #dadce0; padding: 25px 0 0 33px; }

.main { flex: 1; display: flex; flex-direction: column; }
.pagehead { height: 62px; flex: none; border-bottom: 1px solid #dadce0; display: flex; align-items: center; padding: 0 35px 0 25px; }
h1, h2 { margin: 0; font-weight: 400; font-size: 22.500px; }
h1 { margin-left: 35px; padding-bottom: 3px; }
.headacts { margin-left: auto; display: flex; color: #3367d6; font-weight: 500; }
.headacts a { display: flex; align-items: center; gap: 5px; width: 158px; }
.headacts .rf { width: 135px; gap: 7px; }
.headacts .ln { width: 76px; }

.scroll { flex: 1; min-height: 0; display: flex; overflow: hidden; }
.content { width: 1580px; }
.bar { margin-left: 7px; width: 13px; padding-top: 65px; }
.bar i { display: block; height: 222px; background: #c8c8c8; border: 1px solid #b4b4b4; }
.info { margin: 0; height: 80px; padding-left: 30px; display: grid; grid-template-columns: 313.500px 128.500px 179px 1fr; }
.info div { margin-top: -9px; }
.info dt { font-weight: 500; line-height: 28px; height: 32px; }
.info dd { margin: 0; color: #5f5f5f; line-height: 24px; display: flex; align-items: center; white-space: nowrap; }
.warn svg { margin: 0 5.500px 0 3px; }
.tabs { height: 48px; border-bottom: 1px solid #dadce0; display: flex; font-weight: 500; color: #5a5a5a; }
.tabs a { padding: 1px 29.950px 0; display: flex; align-items: center; height: 48px; white-space: nowrap; }
.tabs .on { color: #3367d6; border-bottom: 3px solid #3367d6; padding: 4px 30px 0; height: 47px; }
.split { display: flex; }

.tree { width: 450px; flex: none; border-right: 1px solid #dadce0; height: 620px; overflow: hidden; }
.treehead { height: 61px; display: flex; align-items: center; justify-content: space-between; padding: 0 25px 0 30px; border-bottom: 1px solid #dadce0; }
.treehead h2 { padding-bottom: 2px; }
.treehead svg { margin-top: 2px; }
.tr { height: 36px; border-bottom: 1px solid #dadce0; display: flex; align-items: center; padding: 2px 12px 0 0; }
.tr .ca { width: 16px; height: 8px; margin-right: 19px; fill: #5f5f5f; }
.tr .shut { transform: rotate(-90deg); }
.tr .bk { width: 18px; height: 18px; }
.tr .fo { width: 18px; height: 16px; }
.tr a { margin-left: 10px; margin-right: auto; }
.tr a, .row a { color: #3367d6; border-bottom: 1px solid #3367d6; line-height: 20px; white-space: nowrap; }
.tr a.v { color: #7b1fa2; border-color: #7b1fa2; }
.dt { width: 6px; height: 20px; margin-top: 1px; }
.l0 { padding-left: 22px; } .l1 { padding-left: 47px; } .l2 { padding-left: 72px; } .l3 { padding-left: 97px; }
.l4 { padding-left: 122px; } .l5 { padding-left: 147px; } .l6 { padding-left: 172px; }

.objects { flex: 1; width: 1130px; }
.crumbs { display: flex; align-items: center; padding: 24px 0 0 35px; height: 64px; color: #5f5f5f; }
.crumbs svg { width: 8px; height: 12px; margin: 1px 15px 0 12px; }
.crumbs .cur { color: #000; }
.crumbs .copy { width: 16px; height: 18px; margin: 0 0 0 8px; }
.acts { height: 58px; border-bottom: 1px solid #dadce0; display: grid; grid-template-columns: 162px 128px 191px 1fr; padding: 14px 0 0 55px; color: #3367d6; font-weight: 500; line-height: 25px; }
.acts a, .show a { display: flex; align-items: center; height: 25px; }
.acts svg, .show svg { width: 12px; height: 6px; margin-left: 9px; fill: #3367d6; }
.filter { height: 51px; border-bottom: 1px solid #dadce0; display: flex; align-items: center; }
.filter > span { display: flex; align-items: center; height: 30px; padding-bottom: 2px; }
.filter .prefix { width: 245px; padding-left: 25px; border-right: 1px solid #dadce0; }
.prefix svg { margin-left: 6px; }
.filter .fbox { width: 574px; padding-left: 25px; border-right: 1px solid #dadce0; }
.fbox b { font-weight: 500; margin: 0 16px 0 8px; }
.ph { color: #757575; border-left: 1px solid #000; line-height: 19px; letter-spacing: -0.03px; }
.filter .show { width: 241px; padding-left: 10px; border-right: 1px solid #dadce0; font-size: 15.500px; }
.show a { margin-left: 9px; color: #3367d6; font-weight: 500; font-size: 16.250px; }
.cols { padding-left: 27px; }
.cols svg { margin-top: 2px; }
.row { height: 36.500px; display: grid; grid-template-columns: 80px 304px 126px 122px 222px 131px 72px 73px; border-bottom: 1px solid #dadce0; color: #5f5f5f; }
.row.head { height: 36px; background: #f5f5f5; font-weight: 500; font-size: 15px; color: #757575; }
.row > span { display: flex; align-items: center; white-space: nowrap; }
.row.head > span { padding-bottom: 2px; }
.row > i { width: 20px; height: 20px; border: 2px solid #000; border-radius: 3px; margin: 7.500px 0 0 25px; }
.row.head > i { margin-top: 9px; }
.row .c1 { border-left: 1px solid #dadce0; padding-left: 20px; }
.row .lm { overflow: hidden; }
.row .ra { border-left: 1px solid #dadce0; padding-left: 12px; }
.row .dl { width: 16px; height: 18px; }
.row .dt { margin-left: 25px; }
.row .doc { width: 18px; height: 18px; margin: 0 9px 0 2px; }
.row .q { width: 18px; height: 18px; margin: 2px 0 0 9px; fill: #000; }

/* taskbar */
.taskbar {
  height: 60px;
  flex: none;
  display: flex;
  align-items: center;
  border-top: 1px solid #3a4050;
  background: linear-gradient(90deg, #1c222d 0, #1b222e 310px, #11224e 370px, #11205a 620px, #121a63 680px, #11244f 740px, #111d62 900px, #1a1d3e 1040px, #1a1d3c 1100px, #12205a 1260px, #161e4c 1340px, #1b1f38 1440px, #1b222e 1560px, #1c222c 1920px);
  color: #fff;
  font-family: "Open Sans", "Noto Sans", sans-serif;
  font-size: 14.500px;
}
.weather { display: flex; align-items: center; gap: 9px; padding-left: 25px; width: 667px; line-height: 20px; letter-spacing: -0.15px; }
.weather div { padding-bottom: 1px; }
.weather span { color: #c3c6cc; }
.dock { display: flex; align-items: center; }
.find { margin-left: 17px; width: 275px; height: 40px; border-radius: 20px; background: #353f6b; border: 1px solid #4b547c; display: flex; align-items: center; gap: 12px; padding-left: 14px; color: #d5d8e4; font-size: 17px; letter-spacing: -0.2px; margin-right: 2px; }
.app { width: 50px; height: 50px; margin-left: 5px; display: flex; align-items: center; justify-content: center; border-radius: 5px; position: relative; }
.app:nth-child(3) { margin-left: 3px; }
.app.run::after { content: ""; position: absolute; bottom: 1px; left: 21px; width: 8px; height: 4px; border-radius: 2px; background: #8c90a3; }
.app.on { background: #2a2e4b; border: 1px solid #353954; }
.app.on::after { left: 14px; width: 20px; bottom: 0; background: #4cc2ff; }
.tray { margin-left: auto; display: flex; align-items: center; padding-right: 25px; gap: 10px; }
.lang { margin-left: 16px; margin-right: 13px; }
.clock { text-align: right; line-height: 20px; width: 78px; letter-spacing: -0.1px; white-space: nowrap; padding-bottom: 2px; }
```
